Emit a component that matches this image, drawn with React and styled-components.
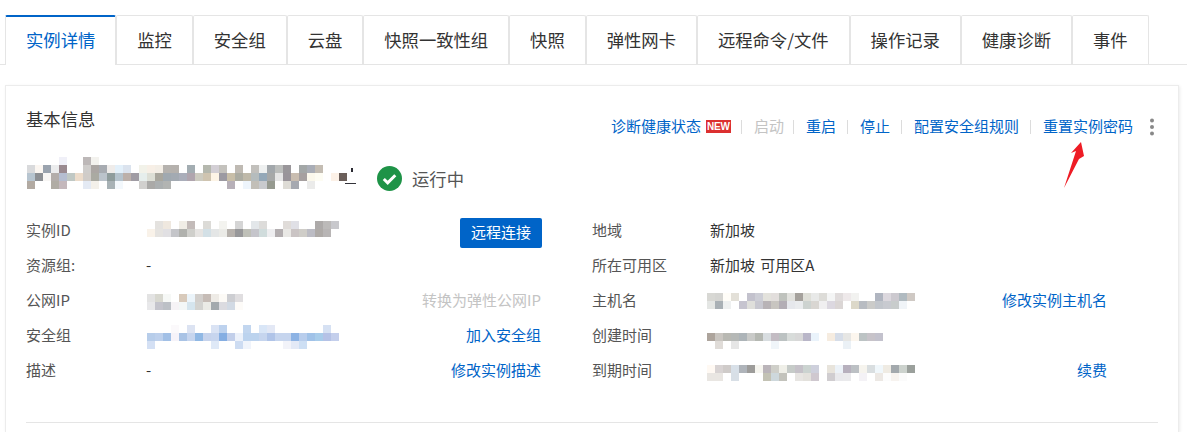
import React from "react";
import styled, { createGlobalStyle } from "styled-components";

const Global = createGlobalStyle`
  html, body { margin: 0; padding: 0; height: 432px; overflow: hidden; background: #fff; }
  body { font-family: "Noto Sans CJK SC", "Liberation Sans", sans-serif; font-size: 15px; color: #333; }
  * { box-sizing: border-box; }
`;

const Page = styled.div`padding: 15px 8px 0 5px; height: 432px; overflow: hidden;`;
const TabBar = styled.div`
  display: flex; height: 50px; margin: 0 -8px 0 -5px; padding-left: 5px;
  border-bottom: 1px solid #e5e5e5;
`;
const Tab = styled.div`
  flex: none; height: ${p => (p.$active ? "50px" : "49px")}; padding: 0 20px; margin-right: -.1px;
  font-size: 13pt; line-height: ${p => (p.$active ? "46px" : "47px")};
  color: ${p => (p.$active ? "#0064c8" : "#333")};
  background: #fff; border: 1px solid #e5e5e5; border-bottom: 0;
  border-top: ${p => (p.$active ? "2px solid #0064c8" : "1px solid #e5e5e5")};
  border-radius: 2px 2px 0 0; white-space: nowrap;
`;
const Panel = styled.section`
  position: relative; margin-top: 20px; width: 1174px; height: 347px; padding: 20px 20px 0;
  border: 1px solid #ececec; border-bottom: 0; box-shadow: 1px 1px 3px rgba(0, 0, 0, .08); background: #fff;
`;
const Header = styled.div`display: flex; justify-content: space-between; height: 31px;`;
const Title = styled.h2`margin: 0; font-size: 13pt; font-weight: 400; line-height: 26px; color: #333;`;
const Actions = styled.div`display: flex; align-items: center; height: 20px; margin: 10px 4px 0 0; line-height: 20px; white-space: nowrap;`;
const Link = styled.a`color: #0064c8; cursor: pointer; white-space: nowrap;`;
const Disabled = styled.span`color: #c4c4c4; margin-right: ${p => p.$pull || 0}px;`;
const Sep = styled.i`display: block; width: 1px; height: 14px; margin: 1px 11.5px 0; background: #dcdcdc;`;
const Badge = styled.b`
  display: block; width: 25px; height: 13px; margin: 1px -1px 0 5px; background: #dc3030; color: #fff;
  font: bold 10px/13px "Liberation Sans", sans-serif; text-align: center; letter-spacing: -.2px;
`;
const More = styled.svg`display: block; margin: 1px -1px 0 16px;`;
const NameRow = styled.div`display: flex; align-items: flex-start; height: 32px; margin-top: 20px;`;
const Status = styled.div`display: flex; align-items: center; gap: 10px; margin: 9px 0 0 16px; font-size: 13pt; line-height: 23px; color: #555;`;
const Blot = styled.svg`display: block; flex: none; margin-top: ${p => p.$top || 0}px; margin-left: ${p => p.$left || 0}px; shape-rendering: crispEdges;`;
const InfoGrid = styled.div`display: grid; grid-template-columns: 515px 515px; column-gap: 51px; margin-top: 25px;`;
const Column = styled.div`display: flex; flex-direction: column;`;
const Row = styled.div`display: flex; height: 35px; line-height: 31px;`;
const Label = styled.span`flex: none; width: ${p => p.$w}px; color: #555;`;
const Value = styled.span`flex: 1; color: #333; white-space: pre; word-spacing: 2px;`;
const Spacer = styled.div`flex: 1;`;
const RowAction = styled.div`flex: none; text-align: right; white-space: nowrap;`;
const Connect = styled.button`
  display: block; width: 82px; height: 30px; margin: 4px -1px 0 0; padding: 0 0 2px; border: 0; border-radius: 2px;
  background: #0064c8; color: #fff; font: inherit; font-size: 15px; line-height: 28px;
`;
const Divider = styled.hr`margin: 33px 0 0; border: 0; border-top: 1px solid #e5e5e5;`;
const Arrow = styled.svg`position: absolute; left: 1055px; top: 54px;`;

const Mosaic = ({ rows, top, left }) => {
  const data = rows.map(r => r.split(" "));
  const cols = Math.max(...data.map(r => r.length));
  return (
    <Blot width={cols * 8} height={rows.length * 8} $top={top} $left={left} viewBox={`0 0 ${cols * 8} ${rows.length * 8}`}>
      {data.flatMap((r, y) => r.map((c, x) => c === "." ? null : <rect key={`${x}-${y}`} x={x * 8} y={y * 8} width="8" height="8" fill={`#${c}`} />))}
    </Blot>
  );
};

const M = {
  title: [
    ". . . . f0f0f8 . . bdb8b8 f3f2ee",
    "d9dadc fbf6f1 9aa3ae ebeced 9a8a90 . . cfcdcb aba6a3 a7abb1 efecea e3f0fa dbe3ee . f2f2e9 f7efe6 f3eee6 b5b2ae b5b1ad . a3adb2 . b5b8ae d3cfd5 c4c2bd . bfbab3 . c2c0bc eef0f0 a2a7ab bcbebc 99969a . a3a7a7 a9adb6 c4bdb3",
    "b7c5d0 8d9094 f8f6f4 b3adaa b5bdd0 c0c8c4 ecdccb d0ccc8 aaaaa2 bbc3cb 8f9c9c b5c3cd bcb0aa a09ca4 e6eeec dddfd6 a9a79e a0a9b0 a3aab2 aaaeba b0a5ae cdcbc0 cfc4b0 fdf4e6 9c9aa2 c8bea8 acaca2 bfb9a9 b5bcbd 94a8b8 a6a8a8 e5e5e5 99949a c9bdb0 a6a0a0 fbf8ec fdfcf3",
    "b2aaa2 . . b0aca4 c4b8bc . . e4eaf4 f3f0ea . a8b2b6 f3f8fc . . d1d0ce aaa9a7 abafb0 b2b4b2 . . . . . . . b7b0b8 . eef5fc c2bfb8 c8cace 969a90 . dedcd6 a6a9b0 . ebebea",
  ],
  id: [
    ". e4e2df efe8df . f0ede6 c3bbb9 . dcdbd7 . f3f3ef . d5d5d5 . e3e7ea dddcda . . e0dcd9 e0e0e6 . . adaaa9 bcbab9 c8c8cc",
    "f9f2e9 e5e3e0 e1e0e3 c4c5c9 b0b1ad cfcfcb e6e4e2 d3e0e6 e4e6e6 ebebe7 b7b2ad 98989a bfc0b8 c5c5cb d0dcdc eeeef0 b3aeb0 e9e8e5 cac4c4 cfcdc8 bcbcc4 aeaaa7 b8b5b5",
  ],
  ip: [
    "e3e3e3 d8d8d0 f6f8f6 . d8cabb ebf4fa d2cfcc c6bcb6 eeebe6 fcfaf6 cdced2 e0dee0",
    "e8e8ea c4c4cc bcc0c6 f6f3f6 f3f7f7 d5e5ee d3d3d0 ebebe6 a3a9ad dbdbe0 d2dae4 fdfbf8",
  ],
  group: [
    ". . . fbf9fb . dce3f2 . . dae3f4 bdd2ee . . c2d6ef . d9e6f7 e3e8f5 . . . . . . d6e1f3",
    "b7cdea bdd0ec a2c0e6 f6f3f9 a9c3e5 c6d5ee 90b8e4 c6d3ec c7d5ee 85aee2 c2cfea ecf1fa bcd3ee bcd3ee c6d5ee b0c4e8 c6d5ee c6d5ee 8db3e4 b8cdec a0c2e8 a8ccea b5c2e6 c4cfec",
    "d4e0f4 . . . . . . . dfe9f7 . . cddcf2 f0f4fb . . . . f2f3f9 e3e9f6 cddff4",
  ],
  host: [
    "d8d8d4 d5d5d2 fffdf8 e3e0d8 . c3c2cd cdced6 e3e2dc e2dedc bfc2bd e2e2de a5a19c dfdfd8 e8e9e8 dddcd8 f4f5f5 e0dcdc eee9ea f2f2f0 . . b0b5c0 dcd8de ccc9cf b0bac0 cfc9c4",
    "e4e6e4 a9b0b5 eef0f0 . c6c4cf dfdfdb c8c8d0 b8b3b6 c8c5c0 b3aeb5 e6e8ec eaecee cdd3d0 d9d6d2 f0eff0 dcd8e0 dbd6d5 . dcd8c9 b8bcc2 cbcbc9 c2c6cc c8cad0 c8cccc f0f4f8",
  ],
  created: [
    "ada49c c9c5c0 b8b8b2 b5b8b6 adb4b8 c9cac8 b5b8b2 d8dde0 c3bcc3 bcc2c2 d8dcda d8d8d8 b9b6c8 eaf3fb . f6ece0 d6dde8 e6e6e4 fcf6ee bcc3c4 c7c3c9 c3c2cd",
    ". e0dcd8 . e6e6e6 . . . . f0f5f9 . . . . . . . . ebf1f6",
  ],
  expire: [
    "fff9f3 d8d3d3 cfcbc9 d8e0e8 afb4ba 9d9c9a f6f5ef bab4b9 cfcfc9 efefe8 c6cbc8 c5c1c8 cbd3d0 ced0dc . e8e4dc ecf2f8 b7b0bd bcc0c4 f6f4ee d9dee0 f0f7fb efebe3 a3a9ad ccd2cd 9ba09c",
    "e9e6e2 e9e6e2 . d8dfe6 . . . c3c2b4 ced8dc c3c3bc . e7e5e2 e3e1dc cfc8cf . d0cdd0 e9e9ec eaeaec . f4f2f6 . ece8e4 fcfcfc f7f3ef fbfbfb",
  ],
};

const tabs = ["实例详情", "监控", "安全组", "云盘", "快照一致性组", "快照", "弹性网卡", "远程命令/文件", "操作记录", "健康诊断", "事件"];

const NameMark = () => (
  <Blot width="30" height="32" viewBox="0 0 30 32" $left={8}>
    <rect x="0" y="16" width="8" height="8" fill="#fcf1e7" />
    <rect x="8" y="16" width="8" height="8" fill="#6b5f5a" />
    <rect x="20" y="11" width="2" height="4" fill="#2b2b33" />
    <rect x="14" y="26" width="11" height="1" fill="#33333a" />
  </Blot>
);

export default function App() {
  return (
    <Page>
      <Global />
      <TabBar>
        {tabs.map((t, i) => <Tab key={t} $active={i === 0}>{t}</Tab>)}
      </TabBar>
      <Panel>
        <Header>
          <Title>基本信息</Title>
          <Actions>
            <Link>诊断健康状态</Link>
            <Badge>NEW</Badge>
            <Sep />
            <Disabled $pull={-2}>启动</Disabled>
            <Sep />
            <Link>重启</Link>
            <Sep />
            <Link>停止</Link>
            <Sep />
            <Link>配置安全组规则</Link>
            <Sep />
            <Link>重置实例密码</Link>
            <More width="6" height="18" viewBox="0 0 6 18">
              <circle cx="3" cy="2.5" r="2" fill="#888" />
              <circle cx="3" cy="9" r="2" fill="#888" />
              <circle cx="3" cy="15.5" r="2" fill="#888" />
            </More>
          </Actions>
        </Header>
        <NameRow>
          <Mosaic rows={M.title} left={1} />
          <NameMark />
          <Status>
            <svg width="25" height="25" viewBox="0 0 25 25">
              <circle cx="12.5" cy="12.5" r="12.5" fill="#1e9347" />
              <path d="M6.8 13l3.9 3.9 7.6-7.6" fill="none" stroke="#fff" strokeWidth="3" />
            </svg>
            运行中
          </Status>
        </NameRow>
        <InfoGrid>
          <Column>
            <Row>
              <Label $w={120}>实例ID</Label>
              <Spacer><Mosaic rows={M.id} top={7} left={1} /></Spacer>
              <RowAction><Connect>远程连接</Connect></RowAction>
            </Row>
            <Row>
              <Label $w={120}>资源组:</Label>
              <Value>-</Value>
            </Row>
            <Row>
              <Label $w={120}>公网IP</Label>
              <Spacer><Mosaic rows={M.ip} top={10} left={1} /></Spacer>
              <RowAction><Disabled>转换为弹性公网IP</Disabled></RowAction>
            </Row>
            <Row>
              <Label $w={120}>安全组</Label>
              <Spacer><Mosaic rows={M.group} top={6} left={1} /></Spacer>
              <RowAction><Link>加入安全组</Link></RowAction>
            </Row>
            <Row>
              <Label $w={120}>描述</Label>
              <Value>-</Value>
              <RowAction><Link>修改实例描述</Link></RowAction>
            </Row>
          </Column>
          <Column>
            <Row>
              <Label $w={118}>地域</Label>
              <Value>新加坡</Value>
            </Row>
            <Row>
              <Label $w={118}>所在可用区</Label>
              <Value>新加坡 可用区A</Value>
            </Row>
            <Row>
              <Label $w={118}>主机名</Label>
              <Spacer><Mosaic rows={M.host} top={9} left={-3} /></Spacer>
              <RowAction><Link>修改实例主机名</Link></RowAction>
            </Row>
            <Row>
              <Label $w={118}>创建时间</Label>
              <Spacer><Mosaic rows={M.created} top={14} left={-3} /></Spacer>
            </Row>
            <Row>
              <Label $w={118}>到期时间</Label>
              <Spacer><Mosaic rows={M.expire} top={11} left={-3} /></Spacer>
              <RowAction><Link>续费</Link></RowAction>
            </Row>
          </Column>
        </InfoGrid>
        <Divider />
        <Arrow width="24" height="50" viewBox="0 0 24 50">
          <polygon points="20,2 10,13 15,11 3,48 18,19 23,16" fill="#ee1c25" />
        </Arrow>
      </Panel>
    </Page>
  );
}
